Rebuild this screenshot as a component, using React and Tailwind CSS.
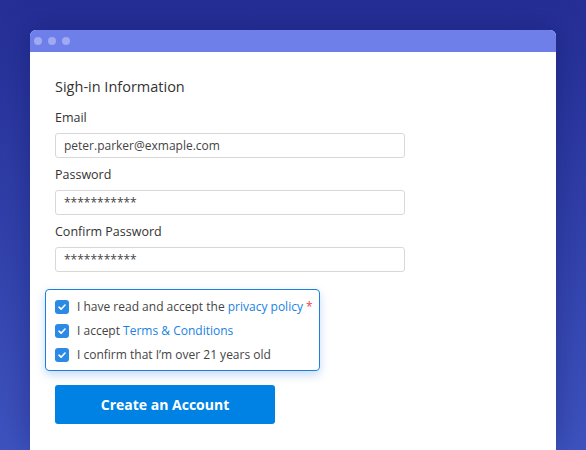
import React from 'react';

const Check = () => (
    <span className="w-[14px] h-[14px] rounded-[3px] bg-[#2b8ae6] flex items-center justify-center shrink-0">
        <svg width="10" height="10" viewBox="0 0 10 10" fill="none">
            <path d="M2 5.2 L4.1 7.2 L8 3" stroke="white" strokeWidth="1.6" strokeLinecap="round" strokeLinejoin="round" />
        </svg>
    </span>
);

const Field = ({ label, value }) => (
    <div className="flex flex-col">
        <label className="text-[12.5px] text-[#333] font-medium leading-[18px] mb-[6px]">{label}</label>
        <div className="w-[350px] h-[25px] border border-[#d8d8d8] rounded-[3px] px-[8px] flex items-center text-[12px] text-[#444]">
            {value}
        </div>
    </div>
);

const App = () => {
    return (
        <div
            className="w-[586px] h-[450px] overflow-hidden bg-gradient-to-b from-[#252e95] to-[#3e53bf] pt-[30px] pl-[30px]"
            style={{ fontFamily: '"Open Sans", sans-serif' }}
        >
            <div className="w-[526px] h-[420px] bg-white rounded-t-[6px] overflow-hidden shadow-[0_0_30px_rgba(10,15,80,0.35)]">
                {/* title bar */}
                <div className="h-[22px] bg-[#6f7fe9] flex items-center gap-[6px] pl-[4px]">
                    <span className="w-[8px] h-[8px] rounded-full bg-[#a0aaf2]" />
                    <span className="w-[8px] h-[8px] rounded-full bg-[#a0aaf2]" />
                    <span className="w-[8px] h-[8px] rounded-full bg-[#a0aaf2]" />
                </div>

                <div className="pl-[25px] pt-[25px]">
                    <h2 className="text-[14.5px] text-[#333] leading-[20px] mb-[12px]">Sigh-in Information</h2>

                    <div className="flex flex-col gap-[8px]">
                        <Field label="Email" value="peter.parker@exmaple.com" />
                        <Field label="Password" value="***********" />
                        <Field label="Confirm Password" value="***********" />
                    </div>

                    <div className="-ml-[10px] mt-[17px] w-[275px] border border-[#1a7fe0] rounded-[4px] pl-[9px] pt-[5px] pb-[3px] flex flex-col shadow-[0_4px_10px_rgba(30,110,220,0.25)] text-[12px] text-[#444]">
                        <div className="flex items-center gap-[8px] h-[24px]">
                            <Check />
                            <span>I have read and accept the <span className="text-[#1a82e2]">privacy policy</span> <span className="text-[#e5484d]">*</span></span>
                        </div>
                        <div className="flex items-center gap-[8px] h-[24px]">
                            <Check />
                            <span>I accept <span className="text-[#1a82e2]">Terms &amp; Conditions</span></span>
                        </div>
                        <div className="flex items-center gap-[8px] h-[24px]">
                            <Check />
                            <span>I confirm that I’m over 21 years old</span>
                        </div>
                    </div>

                    <button className="mt-[14px] w-[220px] h-[39px] bg-[#0082e5] text-white font-bold text-[14px] rounded-[3px]">
                        Create an Account
                    </button>
                </div>
            </div>
        </div>
    );
};

export default App;
